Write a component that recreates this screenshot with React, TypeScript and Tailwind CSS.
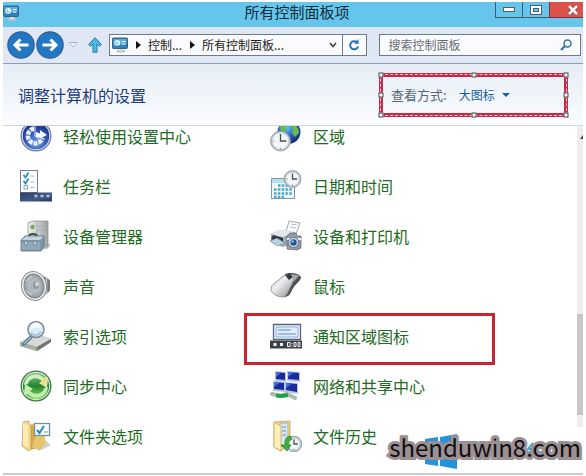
import type { ReactNode } from 'react';

function MonitorIcon({ className }: { className: string }) {
  return (
    <svg viewBox="0 0 16 16" className={className} aria-hidden="true">
      <ellipse cx="9" cy="14" rx="4.5" ry="1.6" fill="#b9c3c9" />
      <path d="M7 11h4v3H7z" fill="#d5dde1" />
      <rect x=".5" y="1" width="15" height="10.5" rx=".8" fill="#2e7fbd" stroke="#39647f" />
      <path d="M1.5 2h13v4.500L1.500 9z" fill="#5ab0dd" />
      <circle cx="5.300" cy="5.800" r="2.300" fill="none" stroke="#e8f7ff" strokeWidth="1.200" />
      <path d="M5.300 5.800V3.500M5.300 5.800h2.500M10 4.500h3.500M10 7h3.500" stroke="#fff" strokeWidth="1.200" />
    </svg>
  );
}

function ArrowCircle({ flip }: { flip?: boolean }) {
  return (
    <svg viewBox="0 0 28 28" className="size-7" aria-hidden="true">
      <circle cx="14" cy="14" r="13.200" fill="#2277c4" stroke="#355f92" strokeWidth="1.200" />
      <g transform={flip ? 'rotate(180 14 14)' : undefined}>
        <path d="M21.500 14H8M13.500 8.500L8 14l5.500 5.500" fill="none" stroke="#fff" strokeWidth="3" />
      </g>
    </svg>
  );
}

function Clock({ x, y, r }: { x: number; y: number; r: number }) {
  return (
    <g>
      <circle cx={x} cy={y} r={r} fill="#bcc4ca" stroke="#8c969f" strokeWidth=".8" />
      <circle cx={x} cy={y} r={r - 1.8} fill="#f2f6f8" stroke="#c8d0d6" strokeWidth=".6" />
      <path d={`M${x} ${y - r + 3}V${y}H${x + r - 4}`} fill="none" stroke="#46525e" strokeWidth="1.300" />
      <path
        d={`M${x} ${y + r - 3}v1.200M${x - r + 2.500} ${y}h1.200`}
        stroke="#7b8791"
        strokeWidth="1"
      />
    </g>
  );
}

function Icon({ children }: { children: ReactNode }) {
  return (
    <svg viewBox="0 0 32 32" className="size-8 shrink-0" aria-hidden="true">
      {children}
    </svg>
  );
}

const EaseIcon = (
  <Icon>
    <defs>
      <radialGradient id="ease" cx=".5" cy=".75" r=".75">
        <stop offset="0" stopColor="#6f9be6" />
        <stop offset=".6" stopColor="#2c4fae" />
        <stop offset="1" stopColor="#1a2e78" />
      </radialGradient>
    </defs>
    <circle cx="16" cy="16" r="15.500" fill="#6f7cab" />
    <circle cx="16" cy="16" r="14.300" fill="#dfe6f5" />
    <circle cx="16" cy="16" r="13.300" fill="url(#ease)" />
    <path
      d="M14 8.500A7.500 7.500 0 1 0 22.500 18"
      fill="none"
      stroke="#e9f1ff"
      strokeWidth="4.500"
      strokeDasharray="4 1"
    />
    <path d="M15 6v10M15 16l4 3" stroke="#e9f1ff" strokeWidth="1" />
    <path d="M16 12l4 1.500V10l7 5-6 3-5-1z" fill="#fff" />
  </Icon>
);

const TaskbarIcon = (
  <Icon>
    <defs>
      <linearGradient id="task" x2="1" y2="1">
        <stop stopColor="#2d3f60" />
        <stop offset=".6" stopColor="#435a8a" />
        <stop offset="1" stopColor="#26344f" />
      </linearGradient>
    </defs>
    <rect x=".5" y=".5" width="17" height="22" fill="#fbfcfd" stroke="#777f87" />
    <path d="M3.500 5l2 2.500 3-5M3.500 11l2 2.500 3-5" fill="none" stroke="#2589bd" strokeWidth="1.700" />
    <rect x="4" y="15.500" width="3.500" height="3.500" fill="none" stroke="#91a4ae" />
    <path d="M10.500 6H14M10.500 12H14M10.500 17.500H14" stroke="#a9b3bb" />
    <rect y="22.500" width="32" height="9" fill="url(#task)" />
    <path d="M14.500 26h3M20.500 26h3M26.500 26h3" stroke="#b2c0dc" strokeWidth="2.600" />
  </Icon>
);

const DeviceManagerIcon = (
  <Icon>
    <defs>
      <linearGradient id="tower" x2="1">
        <stop stopColor="#f0f1f0" />
        <stop offset="1" stopColor="#9ea2a4" />
      </linearGradient>
    </defs>
    <path d="M25 28l5-5v3l-4 4z" fill="#c5c5c5" />
    <path d="M8 3l5-2h15v25l-5 3H8z" fill="url(#tower)" stroke="#8f9392" strokeWidth=".8" />
    <path d="M17 2v24M17 6h10M17 10h10" stroke="#a8abab" strokeWidth=".7" />
    <circle cx="12.500" cy="7" r="2.200" fill="#77a65d" />
    <path d="M9 17q0-3 4-3t4 3" fill="none" stroke="#3f484e" strokeWidth="2" />
    <path d="M1 20l4-4h19v10l-3 5H1z" fill="#7c97a9" stroke="#586e7c" strokeWidth=".8" />
    <path d="M1.500 20l4-3.500h18L20 20z" fill="#c3d4de" />
    <path d="M1.500 22H20v8H1.500z" fill="#91a9b8" />
    <path d="M5 21h2v4H5zM14 21h2v4h-2z" fill="#e8f0f4" stroke="#546b79" strokeWidth=".6" />
  </Icon>
);

const SoundIcon = (
  <Icon>
    <defs>
      <radialGradient id="cone">
        <stop stopColor="#8b939b" />
        <stop offset=".45" stopColor="#b6bdc3" />
        <stop offset="1" stopColor="#949ba1" />
      </radialGradient>
    </defs>
    <path d="M16 4c8 2 13 4 14 7v9c-2 4-7 6-14 8z" fill="#74797e" />
    <path d="M23 6v20M26.500 8v16" stroke="#c6cacd" strokeWidth="1.600" />
    <ellipse cx="14" cy="16" rx="12.500" ry="14.500" transform="rotate(-12 14 16)" fill="#eceeef" stroke="#8b9095" />
    <ellipse cx="14" cy="16" rx="10" ry="12" transform="rotate(-12 14 16)" fill="url(#cone)" stroke="#7b8289" />
    <ellipse cx="16" cy="15" rx="4" ry="5" fill="#979fa6" stroke="#c1c7cc" />
    <ellipse cx="17" cy="14" rx="1.800" ry="2.200" fill="#d2d8dc" />
    <path d="M6 11l6-5M6 21l6 4" stroke="#cbd0d4" strokeWidth="1.500" />
  </Icon>
);

const IndexIcon = (
  <Icon>
    <path d="M0 22l16-8 15 5v3L17 31 0 26z" fill="#878c86" />
    <path d="M0 22l16-8 15 5-14 8z" fill="#d7dad5" />
    <path d="M0 22l17 5v4L0 26z" fill="#aab0a7" />
    <path d="M17 27l14-8v3L17 31z" fill="#6f756d" />
    <path d="M15 27.500l3 .8v1.500l-3-.8z" fill="#70b846" />
    <path d="M11 17L4 24" stroke="#4f718e" strokeWidth="3.500" strokeLinecap="round" />
    <path d="M11 17L4 24" stroke="#b2c7d6" strokeWidth="1.200" />
    <circle cx="16" cy="9.500" r="8" fill="#d9edf9" stroke="#818d98" strokeWidth="1.600" />
    <path d="M10 10q5-4 12-2-1-5-6-5-5 1-6 7z" fill="#f8fcff" />
    <path d="M11 13q5 5 10-1" fill="none" stroke="#8fc0de" strokeWidth="1.500" />
  </Icon>
);

const SyncIcon = (
  <Icon>
    <defs>
      <linearGradient id="sync" x2="0" y2="1">
        <stop stopColor="#8ccf83" />
        <stop offset=".5" stopColor="#238431" />
        <stop offset="1" stopColor="#8ee35f" />
      </linearGradient>
    </defs>
    <circle cx="16" cy="16" r="15.500" fill="#427647" />
    <circle cx="16" cy="16" r="14.200" fill="#d6eed0" />
    <circle cx="16" cy="16" r="13.200" fill="url(#sync)" />
    <path d="M4 15C5 5 17 1 24 8l4-1-1 11-8-5 3-2C17 6 9 8 8 14z" fill="#d3efc5" />
    <path d="M28 17C27 27 15 31 8 24l-4 1 1-11 8 5-3 2c5 5 13 3 14-3z" fill="#c6efae" />
    <path d="M22 8l5-1-1 10-6-4 2-2z" fill="#f0df86" />
  </Icon>
);

const FolderOptionsIcon = (
  <Icon>
    <path d="M12 25l13-5 6 5-12 6z" fill="#d4d0c9" />
    <path d="M10 5l8-2v25l-8 2z" fill="#d4aa50" />
    <path d="M16 14h9v10l-6 6-7-3z" fill="#e7c66b" />
    <path d="M3 2L9 1v3l2 1v24l-2 2-7-5z" fill="#f4d98e" stroke="#bd9748" strokeWidth=".7" />
    <path d="M3 3l5 2v22l-5-2z" fill="#ffedb5" />
    <rect x="14.500" y="3.500" width="15" height="12" fill="#f8fcff" stroke="#7390a1" strokeWidth="1.300" />
    <path d="M17 10l2.500 3L24 6" fill="none" stroke="#2589c0" strokeWidth="2" />
    <path d="M24 12h4" stroke="#7c91a0" />
  </Icon>
);

const RegionIcon = (
  <Icon>
    <defs>
      <radialGradient id="earth" cx=".4" cy=".3" r=".7">
        <stop stopColor="#69c8f5" />
        <stop offset=".55" stopColor="#2468ba" />
        <stop offset="1" stopColor="#142c73" />
      </radialGradient>
    </defs>
    <circle cx="19" cy="12" r="11.500" fill="url(#earth)" />
    <path d="M10 6q5-6 11-4l-2 4-3 1-1 5-4 1zM23 4q6 3 6 9l-4 4-3-4 1-4-2-3z" fill="#69b94b" />
    <Clock x={10.5} y={21} r={10} />
  </Icon>
);

const DateIcon = (
  <Icon>
    <path d="M1.500 8.500h23v20h-23z" fill="#eef9fc" stroke="#7799a8" />
    <path d="M2 9h22v4H2z" fill="#b5e0ec" />
    <path
      d="M8 15.500h14M4 19.500h18M4 23.500h18M4 27h10"
      stroke="#4aa9c5"
      strokeWidth="2.400"
      strokeDasharray="2.500 1.300"
    />
    <Clock x={22.500} y={9} r={8.500} />
  </Icon>
);

const PrinterIcon = (
  <Icon>
    <path d="M19 1l11 2-4 11-10-2z" fill="#fcfdfd" stroke="#899198" strokeWidth=".8" />
    <path d="M21 4l6 1M20 7l6 1" stroke="#b3bdc5" />
    <path d="M1 14l8-4 16 2v12l-13 3-11-7z" fill="#a4abb0" />
    <path d="M1 14l8-4 16 2-12 5z" fill="#e3e7e9" />
    <path d="M3 15l10 3v6L1 19z" fill="#303942" />
    <path d="M0 21l7-3 8 5-7 3z" fill="#b7d5e1" stroke="#66747c" strokeWidth=".6" />
    <path d="M17 16l3-3h6l1 3h4v12l-4 2-10-1z" fill="#8e9ba5" stroke="#59646d" strokeWidth=".7" />
    <path d="M17 18h14v2H17z" fill="#e4eaee" />
    <circle cx="23.500" cy="22.500" r="5" fill="#dce4e9" stroke="#65727e" />
    <circle cx="23.500" cy="22.500" r="3.200" fill="#245595" />
    <circle cx="22.500" cy="21.500" r="1.300" fill="#7cc4ed" />
  </Icon>
);

const MouseIcon = (
  <Icon>
    <defs>
      <linearGradient id="mouse" x2="1" y2="1">
        <stop stopColor="#c9cbcd" />
        <stop offset=".4" stopColor="#ededee" />
        <stop offset="1" stopColor="#85888b" />
      </linearGradient>
    </defs>
    <path d="M15 4c4-2 14-1 16 3 0 4-6 7-9 13-2 5-4 7-8 7z" fill="#4b5056" />
    <path d="M1 19c0-5 6-7 11-12 3-3 7-3 10-1 3 3 1 6-1 10-3 5-4 11-8 11C8 27 1 24 1 19z" fill="url(#mouse)" stroke="#85888b" strokeWidth=".8" />
    <path d="M15 5l5-1 3 3-4 3z" fill="#34383d" />
    <path d="M21 4l8 1.500-5 6z" fill="#a5a9ac" />
  </Icon>
);

const NotificationIcon = (
  <Icon>
    <path d="M3.500 4.500h27v15h-27z" fill="#eef4fb" stroke="#56657a" strokeWidth="1.300" />
    <path d="M6 7h22v10H6z" fill="#e1edfb" stroke="#8db0db" />
    <path d="M8 10h13M8 14h18" stroke="#648bd0" strokeWidth="1.100" />
    <path d="M0 20.500h32v8H0z" fill="#3b4047" />
    <path d="M3.500 24.500h3M10 24.500h3" stroke="#f1f1f1" strokeWidth="2.800" />
    <path d="M17.500 22.500h2.500v4h-2.500zM24 22.500h2v4h-2zM28 22.500h2v4h-2zM22 23v1M22 25.500v1" fill="none" stroke="#f1f1f1" strokeWidth="1" />
  </Icon>
);

const NetworkIcon = (
  <Icon>
    <path d="M5 1l11 1v10L5 11zM17 1l13 1v10l-13-1zM3 11l12 1v10L3 21zM15 12l13 1v11l-13-2z" fill="#b9c4dc" />
    <path d="M6 2l9 1v7l-9-1zM18 2l11 1v7l-11-1zM4 12l10 1v7L4 19zM16 13l11 1v8l-11-2z" fill="#172c9d" />
    <path d="M6 2l5 .500L6 7zM18 2l6 .500-6 4.500zM4 12l6 .500L4 17zM16 13l6 .500-6 4.500z" fill="#466fdb" />
    <path d="M2 24l9 2 6-2 8 4" fill="none" stroke="#a9bdb1" strokeWidth="4" strokeLinecap="round" />
    <path d="M6 25.500l6 .500 6-1" fill="none" stroke="#239d48" strokeWidth="4" />
  </Icon>
);

const HistoryIcon = (
  <Icon>
    <path d="M4 2l16-1v22l-9 8-7-4z" fill="#f7dc88" stroke="#b89345" strokeWidth=".7" />
    <path d="M10 3h8v23h-8z" fill="#d6e6f0" stroke="#8c9aaa" strokeWidth=".7" />
    <path d="M12 7h4M12 11h4M12 15h4" stroke="#7197b1" />
    <path d="M4 2l7 4v25l-7-4z" fill="#ffefb8" stroke="#c5a14f" strokeWidth=".7" />
    <Clock x={24} y={24} r={7.800} />
    <path d="M20 16q-6 1-5 9h-4l6 6 4-6h-3q0-4 4-6z" fill="#42ae3b" stroke="#217c29" strokeWidth=".7" />
  </Icon>
);

const rows = [
  [{ label: '轻松使用设置中心', icon: EaseIcon }, { label: '区域', icon: RegionIcon }],
  [{ label: '任务栏', icon: TaskbarIcon }, { label: '日期和时间', icon: DateIcon }],
  [{ label: '设备管理器', icon: DeviceManagerIcon }, { label: '设备和打印机', icon: PrinterIcon }],
  [{ label: '声音', icon: SoundIcon }, { label: '鼠标', icon: MouseIcon }],
  [{ label: '索引选项', icon: IndexIcon }, { label: '通知区域图标', icon: NotificationIcon, marked: true }],
  [{ label: '同步中心', icon: SyncIcon }, { label: '网络和共享中心', icon: NetworkIcon }],
  [{ label: '文件夹选项', icon: FolderOptionsIcon }, { label: '文件历史', icon: HistoryIcon }],
];

const handles = [
  'left-0 top-0',
  'left-1/2 top-0',
  'left-full top-0',
  'left-0 top-1/2',
  'left-full top-1/2',
  'left-0 top-full',
  'left-1/2 top-full',
  'left-full top-full',
];

function TitleBar() {
  return (
    <header className="grid h-[25px] grid-cols-[1fr_auto_1fr] bg-[#65c5eb]">
      <MonitorIcon className="mt-[3px] size-4" />
      <h1 className="pl-2 text-[15px] leading-5 text-[#102b3a]">所有控制面板项</h1>
      <div className="flex h-4 justify-end">
        <button aria-label="最小化" className="flex w-7 items-center justify-center border border-t-0 border-[#3d5c70]">
          <span className="h-[5px] w-3 border border-[#4d5f6b] bg-white" />
        </button>
        <button aria-label="最大化" className="flex w-[26px] items-center justify-center border-b border-[#3d5c70]">
          <span className="flex h-[10px] w-3 items-center justify-center border border-[#4d5f6b] bg-white">
            <span className="h-1 w-[6px] border border-[#4d5f6b] bg-[#65c5eb]" />
          </span>
        </button>
        <button aria-label="关闭" className="flex w-[34px] items-center justify-center border-b border-l border-[#7c3438] bg-[#dd514c] pl-3">
          <svg viewBox="0 0 12 10" className="h-[10px] w-3" aria-hidden="true">
            <path d="M2 1l8 8M10 1L2 9" stroke="#77494c" strokeWidth="4" />
            <path d="M2 1l8 8M10 1L2 9" stroke="#fff" strokeWidth="2.500" />
          </svg>
        </button>
      </div>
    </header>
  );
}

function Chevron() {
  return (
    <svg viewBox="0 0 5 8" className="h-2 w-[5px] shrink-0" aria-hidden="true">
      <path d="M0 0l5 4-5 4z" fill="#111" />
    </svg>
  );
}

function NavBar() {
  return (
    <nav className="flex h-[37px] items-center border-b border-[#8c9eb2] bg-[#dee7f3] pr-[2px] pl-1 text-xs">
      <button aria-label="后退"><ArrowCircle /></button>
      <button aria-label="前进" className="ml-px"><ArrowCircle flip /></button>
      <button aria-label="最近的位置" className="ml-1">
        <svg viewBox="0 0 10 6" className="h-[6px] w-[10px]" aria-hidden="true">
          <path d="M1 .500h8L5 5z" fill="#f3f5f8" stroke="#aab3bf" />
        </svg>
      </button>
      <button aria-label="上移" className="ml-[10px]">
        <svg viewBox="0 0 14 16" className="h-4 w-[14px]" aria-hidden="true">
          <path d="M7 .700L13.300 7.500 11.500 9.300 9 7v8.300H5V7L2.500 9.300.7 7.500z" fill="#48bce8" stroke="#2d789f" />
        </svg>
      </button>
      <div className="ml-[7px] flex h-[22px] min-w-0 flex-[255] items-center border border-[#707b87] bg-[#f9fbfd] text-[#222]">
        <MonitorIcon className="mr-2 ml-[2px] size-4 shrink-0" />
        <Chevron />
        <button className="mr-2 ml-[7px] whitespace-nowrap">控制...</button>
        <Chevron />
        <button className="mr-auto ml-[7px] whitespace-nowrap">所有控制面板...</button>
        <button aria-label="历史地址" className="mr-[5px]">
          <svg viewBox="0 0 8 6" className="h-[6px] w-2" aria-hidden="true">
            <path d="M1 1l3 3.500L7 1" fill="none" stroke="#454545" strokeWidth="1.700" />
          </svg>
        </button>
        <button aria-label="刷新" className="flex h-full w-6 items-center justify-center border-l border-[#707b87]">
          <svg viewBox="0 0 12 12" className="size-3" aria-hidden="true">
            <path d="M9 3.500A4 4 0 1 0 10 7.500" fill="none" stroke="#2875ae" strokeWidth="2" />
            <path d="M6 4.500L10.500 0v5z" fill="#2875ae" />
          </svg>
        </button>
      </div>
      <label className="ml-3 flex h-[22px] min-w-0 flex-[183] items-center border border-[#707b87] bg-[#f9fbfd] pr-2 pl-[9px]">
        <input
          aria-label="搜索控制面板"
          placeholder="搜索控制面板"
          className="min-w-0 flex-1 bg-transparent text-xs outline-none placeholder:text-[#666d75]"
        />
        <svg viewBox="0 0 12 12" className="size-3 shrink-0" aria-hidden="true">
          <circle cx="7.500" cy="4.500" r="3.500" fill="none" stroke="#2d74a8" strokeWidth="1.500" />
          <path d="M5 7L1 11" stroke="#2d74a8" strokeWidth="2.200" />
        </svg>
      </label>
    </nav>
  );
}

function SettingsHeader() {
  return (
    <section className="flex h-[62px] items-center justify-between border-b border-[#ccd9e3] bg-linear-to-b from-[#e5edf6] to-[#fbfcfe] pr-[15px] pl-[15px]">
      <h2 className="text-base text-[#1d3d7c]">调整计算机的设置</h2>
      <div className="relative flex h-11 w-[189px] items-center border-4 border-[#c92945] pl-2">
        <span className="absolute -inset-[3px] border border-dashed border-[#f4ccd6]" />
        <label htmlFor="view" className="text-[13px] text-[#586674]">查看方式:</label>
        <select id="view" className="ml-3 appearance-none bg-transparent text-xs text-[#175d9f] outline-none">
          <option>大图标</option>
        </select>
        <svg viewBox="0 0 8 4" className="ml-[6px] h-1 w-2" aria-hidden="true">
          <path d="M0 0h8L4 4z" fill="#175d9f" />
        </svg>
        <span className="absolute -inset-[2px]">
          {handles.map((place) => (
            <span
              key={place}
              className={`absolute size-[5px] -translate-1/2 border border-[#4b4147] bg-white ${place}`}
            />
          ))}
        </span>
      </div>
    </section>
  );
}

function Watermark() {
  return (
    <div className="absolute right-0 bottom-0 flex h-[46px] w-[201px] justify-end bg-white">
      <svg viewBox="0 0 201 46" className="absolute inset-0 size-full" aria-hidden="true">
        <path d="M43 12l13-2v15H43zM58 10l17-3v18H58zM43 27h13v12l-13-2zM58 27h17v15l-17-3z" fill="#2394dc" />
        <path d="M151 16l-5 6h5l-6 7M155 18h7M156 25h6M192 17h7M193 25h6M192 31h7" fill="none" stroke="#40a6df" strokeWidth="2" />
      </svg>
      <span className="relative pr-[2px] text-2xl leading-10 text-[#111] [-webkit-text-stroke:6px_#9c9094] [paint-order:stroke_fill]">
        shenduwin8.com
      </span>
    </div>
  );
}

export default function App() {
  return (
    <div className="bg-white px-[3px] pt-[2px] font-['Noto_Sans_CJK_SC',sans-serif]">
      <TitleBar />
      <NavBar />
      <SettingsHeader />
      <div className="relative border-b-2 border-[#c8cccd]">
        <main className="flex overflow-hidden">
          <ul className="-mt-[15px] min-w-0 flex-1 pl-[17px]">
            {rows.map((row) => (
              <li key={row[0].label} className="grid h-[50px] grid-cols-[250px_1fr]">
                {row.map((item) => (
                  <div key={item.label} className="relative flex items-center">
                    <a href="#" className="flex items-center gap-[11px] text-base leading-5 text-[#1d6b24]">
                      {item.icon}
                      {item.label}
                    </a>
                    {'marked' in item && (
                      <span className="pointer-events-none absolute top-[2px] -left-[26px] h-[52px] w-[251px] border-[3px] border-[#c9242f]" />
                    )}
                  </div>
                ))}
              </li>
            ))}
            <li className="h-3" />
          </ul>
          <div className="flex w-[6px] flex-col bg-[#eeeeee]">
            <svg viewBox="0 0 6 4" className="mt-[9px] h-1 w-[6px]" aria-hidden="true">
              <path d="M3 4l3-4v4z" fill="#444" />
            </svg>
            <div className="flex-[175]" />
            <div className="flex-[101] bg-[#c8c8c8]" />
            <div className="flex-[58]" />
          </div>
        </main>
        <Watermark />
      </div>
    </div>
  );
}
